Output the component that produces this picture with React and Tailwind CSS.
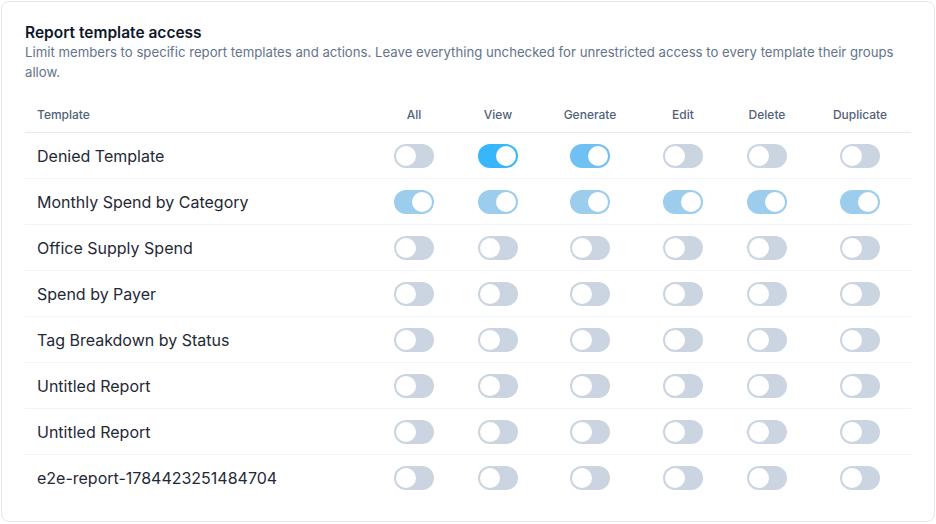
import React from "react";

const cols = ["All", "View", "Generate", "Edit", "Delete", "Duplicate"];

const rows = [
  { name: "Denied Template", states: ["off", "active", "on", "off", "off", "off"] },
  { name: "Monthly Spend by Category", states: ["dim", "dim", "dim", "dim", "dim", "dim"] },
  { name: "Office Supply Spend" },
  { name: "Spend by Payer" },
  { name: "Tag Breakdown by Status" },
  { name: "Untitled Report" },
  { name: "Untitled Report" },
  { name: "e2e-report-1784423251484704" },
];

function Toggle({ state }) {
  const on = state !== "off";
  const track =
    state === "active"
      ? "bg-[#38b6fb]"
      : state === "on"
      ? "bg-[#6ec1f2]"
      : state === "dim"
      ? "bg-[#9ccdec]"
      : "bg-[#cbd5e1]";
  return (
    <div className={`flex h-[24px] w-[40px] items-center rounded-full p-[2px] ${track} ${on ? "justify-end" : "justify-start"}`}>
      <div className="h-[20px] w-[20px] rounded-full bg-white" />
    </div>
  );
}

export default function App() {
  return (
    <div className="min-h-[524px] w-[936px] bg-white p-[1px]" style={{ fontFamily: "Inter, 'Noto Sans', sans-serif" }}>
      <div className="h-[521px] w-[934px] rounded-[8px] border border-[#e5e7eb] bg-white px-[23px] pt-[21px]">
        <h2 className="text-[15.5px] font-semibold leading-[19px] text-[#0f172a]">Report template access</h2>
        <p className="text-[13.2px] leading-[20px] text-[#64748b]">
          Limit members to specific report templates and actions. Leave everything unchecked for unrestricted access to every template their groups allow.
        </p>
        <div className="mt-[16px]">
          <div className="grid h-[35px] grid-cols-[346px_86px_82px_102px_84px_84px_102px] items-center border-b border-[#e2e8f0] text-[12px] font-medium text-[#52627a]">
            <div className="pl-[12px]">Template</div>
            {cols.map((c) => (
              <div key={c} className="text-center">{c}</div>
            ))}
          </div>
          {rows.map((r, i) => (
            <div
              key={i}
              className={`grid h-[46px] grid-cols-[346px_86px_82px_102px_84px_84px_102px] items-center ${i < rows.length - 1 ? "border-b border-[#f1f5f9]" : ""}`}
            >
              <div className="pl-[12px] text-[16px] text-[#1f2937]">{r.name}</div>
              {cols.map((c, j) => (
                <div key={c} className="flex justify-center">
                  <Toggle state={r.states ? r.states[j] : "off"} />
                </div>
              ))}
            </div>
          ))}
        </div>
      </div>
    </div>
  );
}
